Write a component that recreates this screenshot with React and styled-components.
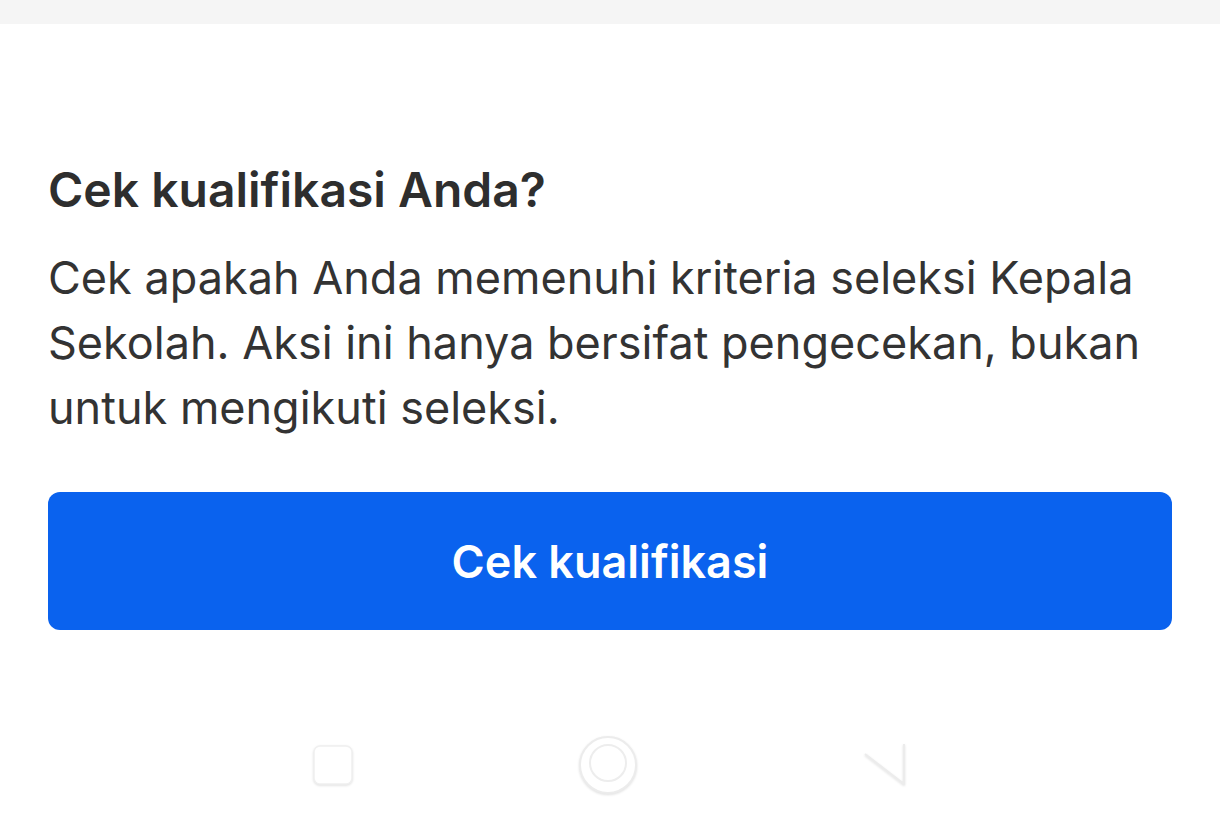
import React from "react";
import styled, { createGlobalStyle } from "styled-components";

const GlobalStyle = createGlobalStyle`
  html, body {
    margin: 0;
    padding: 0;
    background: #ffffff;
  }
  body {
    font-family: Inter, "Noto Sans", "Liberation Sans", sans-serif;
    color: #2e2e2e;
  }
`;

const Screen = styled.div`
  width: 1220px;
  height: 832px;
  display: flex;
  flex-direction: column;
  overflow: hidden;
  background: #ffffff;
`;

const TopStrip = styled.div`
  height: 24px;
  background: #f5f5f5;
  flex-shrink: 0;
`;

const Sheet = styled.section`
  flex: 1;
  display: flex;
  flex-direction: column;
  padding: 138px 48px 0;
`;

const Title = styled.h2`
  margin: 0;
  font-size: 48px;
  font-weight: 600;
  line-height: 56px;
  color: #2e2e2e;
`;

const Description = styled.p`
  margin: 27px 0 0;
  font-size: 45px;
  font-weight: 400;
  line-height: 65px;
  color: #333333;
`;

const PrimaryButton = styled.button`
  margin-top: 52px;
  height: 138px;
  width: 100%;
  border: none;
  border-radius: 12px;
  background: #0a62ee;
  color: #ffffff;
  font-family: inherit;
  font-size: 45px;
  font-weight: 600;
  cursor: pointer;
`;

const NavBar = styled.nav`
  display: flex;
  justify-content: center;
  align-items: center;
  gap: 221px;
  height: 80px;
  margin-top: 95px;
`;

const NavIcon = styled.svg`
  width: ${(p) => p.size}px;
  height: ${(p) => p.size}px;
  filter: drop-shadow(0 1px 1px rgba(0, 0, 0, 0.12));
`;

export default function App() {
  return (
    <>
      <GlobalStyle />
      <Screen>
        <TopStrip />
        <Sheet>
          <Title>Cek kualifikasi Anda?</Title>
          <Description>
            Cek apakah Anda memenuhi kriteria seleksi Kepala Sekolah. Aksi ini
            hanya bersifat pengecekan, bukan untuk mengikuti seleksi.
          </Description>
          <PrimaryButton>Cek kualifikasi</PrimaryButton>
          <NavBar>
            <NavIcon size={46} viewBox="0 0 46 46">
              <rect x="4" y="4" width="38" height="38" rx="6" fill="#ffffff" stroke="#f0f0f0" strokeWidth="1.5" />
            </NavIcon>
            <NavIcon size={62} viewBox="0 0 62 62">
              <circle cx="31" cy="31" r="28" fill="#ffffff" stroke="#ececec" strokeWidth="2" />
              <circle cx="31" cy="29" r="18" fill="none" stroke="#ededed" strokeWidth="2" />
            </NavIcon>
            <NavIcon size={50} viewBox="0 0 50 50">
              <path d="M44 4 L44 44 L5 14" fill="none" stroke="#ececec" strokeWidth="2" strokeLinejoin="round" />
            </NavIcon>
          </NavBar>
        </Sheet>
      </Screen>
    </>
  );
}
